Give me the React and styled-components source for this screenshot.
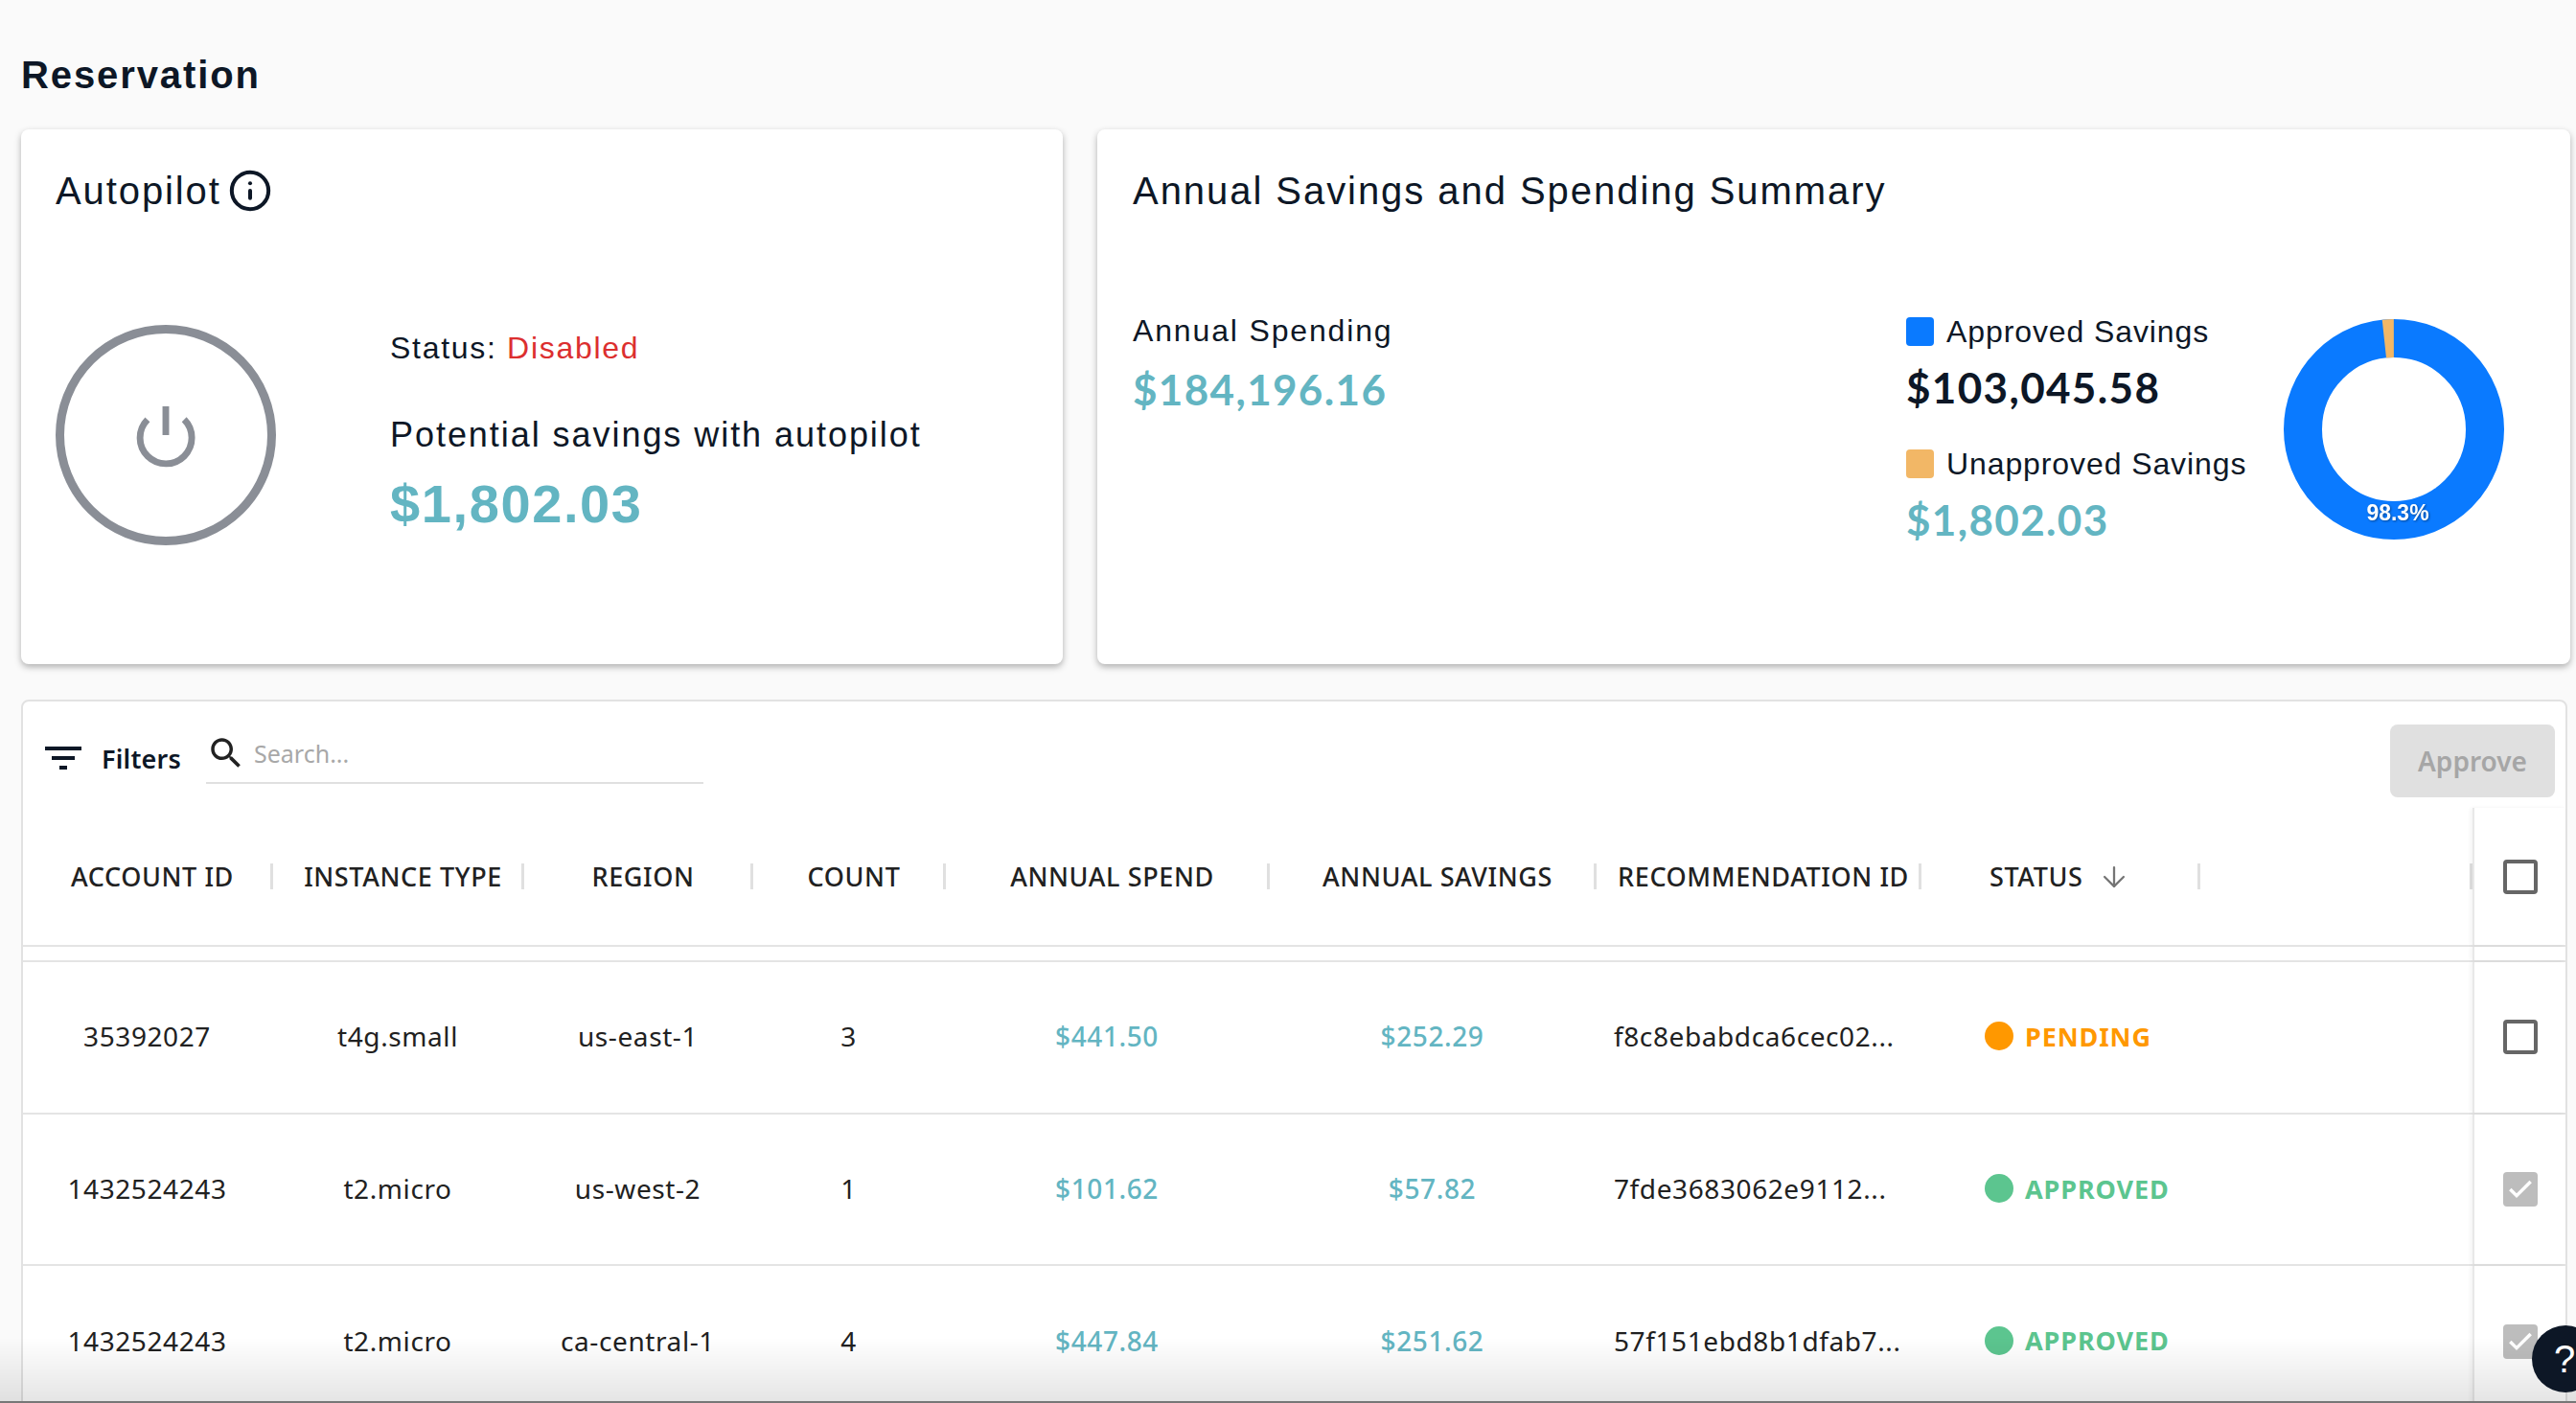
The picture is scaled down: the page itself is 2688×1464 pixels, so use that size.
import styled, { createGlobalStyle } from "styled-components";
import { ArrowDown, Check, Info, Power } from "lucide-react";

const GlobalStyle = createGlobalStyle`
  html, body {
    margin: 0;
    height: 100%;
    overflow: hidden;
    background: #fafafa;
    font-family: "Liberation Sans", Arial, sans-serif;
    color: #0d1726;
  }
`;

const GRID_COLUMNS = "261px 262px 239px 201px 338px 341px 339px 291px 284px 1fr";

const Page = styled.div`
  padding: 55px 6px 0 22px;
  height: 1464px;
  box-sizing: border-box;
  overflow: hidden;
`;

const Title = styled.h1`
  margin: 0 0 34px;
  font-size: 40px;
  line-height: 46px;
  font-weight: 700;
  letter-spacing: 1.9px;
`;

const Cards = styled.div`
  display: flex;
  gap: 36px;
`;

const Card = styled.section`
  width: ${(p) => p.$width}px;
  height: 558px;
  box-sizing: border-box;
  padding: 40px 0 0 ${(p) => p.$pad}px;
  background: #fff;
  border-radius: 8px;
  box-shadow: 0 3px 7px rgba(0, 0, 0, 0.3);
`;

const CardTitle = styled.h2`
  display: flex;
  align-items: center;
  gap: 7px;
  margin: 0;
  height: 48px;
  font-size: 40px;
  font-weight: 400;
  letter-spacing: ${(p) => p.$spacing}px;
`;

const AutopilotBody = styled.div`
  display: flex;
  margin-top: 116px;
`;

const PowerRing = styled.div`
  width: 230px;
  height: 230px;
  box-sizing: border-box;
  flex: none;
  display: flex;
  align-items: center;
  justify-content: center;
  border: 9px solid #8a8e96;
  border-radius: 50%;
  color: #8a8e96;
`;

const AutopilotText = styled.div`
  margin-left: 119px;
  padding-top: 4px;
`;

const StatusLine = styled.div`
  font-size: 32px;
  line-height: 40px;
  letter-spacing: 1.7px;
`;

const Disabled = styled.span`
  color: #dc2f2f;
`;

const PotentialLabel = styled.div`
  margin-top: 49px;
  font-size: 36px;
  line-height: 44px;
  letter-spacing: 1.95px;
`;

const BigAmount = styled.div`
  margin-top: 17px;
  font-size: 56px;
  line-height: 66px;
  font-weight: 700;
  letter-spacing: 1.6px;
  color: #63b5c2;
`;

const SummaryBody = styled.div`
  display: flex;
  margin-top: 102px;
  padding-right: 69px;
`;

const SpendColumn = styled.div`
  flex: 1;
`;

const SummaryLabel = styled.div`
  font-size: 32px;
  line-height: 40px;
  letter-spacing: ${(p) => p.$spacing}px;
`;

// Summary figures use a rounder face than the labels above them
const Amount = styled.div`
  margin-top: ${(p) => p.$top}px;
  font-family: "Lato", sans-serif;
  font-size: 44px;
  line-height: 52px;
  font-weight: 700;
  letter-spacing: 1.35px;
  color: ${(p) => (p.$dark ? "#0d1726" : "#63b5c2")};
`;

const LegendColumn = styled.div`
  width: 394px;
  flex: none;
  padding-top: 1px;
`;

const LegendRow = styled.div`
  display: flex;
  align-items: center;
  gap: 13px;
  margin-top: ${(p) => p.$top}px;
`;

const Swatch = styled.span`
  width: 29px;
  height: 30px;
  border-radius: 4px;
  background: ${(p) => p.$color};
`;

const Donut = styled.svg`
  flex: none;
  width: 230px;
  height: 230px;
  margin-top: 8px;
`;

const DonutLabel = styled.text`
  font-size: 23px;
  font-weight: 700;
  fill: #fff;
  text-anchor: middle;
  filter: drop-shadow(1px 1px 1px rgba(0, 0, 0, 0.4));
`;

const TablePanel = styled.section`
  margin-top: 37px;
  background: #fff;
  border: 2px solid #e2e2e2;
  border-radius: 8px 8px 0 0;
  width: 2657px;
  box-sizing: border-box;
  font-family: "Noto Sans", sans-serif;
`;

const Toolbar = styled.div`
  display: flex;
  height: 111px;
  padding: 24px 11px 0 23px;
  box-sizing: border-box;
`;

const FiltersButton = styled.div`
  display: flex;
  align-items: center;
  gap: 21px;
  height: 60px;
  margin-top: 5px;
  font-size: 27px;
  font-weight: 600;
  letter-spacing: 0.2px;
  color: #0d1726;
`;

const SearchBox = styled.label`
  display: flex;
  align-items: center;
  gap: 8px;
  width: 519px;
  height: 60px;
  margin: 2px 0 0 26px;
  padding: 0 0 2px 0;
  box-sizing: border-box;
  border-bottom: 2px solid #e0e0e0;
  color: #222;
`;

const SearchPlaceholder = styled.span`
  font-size: 25px;
  color: #a8a8a8;
`;

const ApproveButton = styled.button`
  margin-left: auto;
  width: 172px;
  height: 76px;
  border: 0;
  border-radius: 8px;
  background: #e0e0e0;
  color: #a6a6a6;
  font-family: inherit;
  font-size: 28px;
  font-weight: 600;
`;

const Row = styled.div`
  display: grid;
  grid-template-columns: ${GRID_COLUMNS};
  height: ${(p) => p.$height}px;
  box-sizing: border-box;
  border-bottom: 2px solid #e4e4e4;
  align-items: stretch;
`;

const HeaderCell = styled.div`
  display: flex;
  align-items: center;
  font-size: 27px;
  font-weight: 500;
  letter-spacing: 0.6px;
  color: #212121;
`;

const HeaderLabel = styled.span`
  flex: 1;
  display: flex;
  align-items: center;
  justify-content: ${(p) => (p.$left ? "flex-start" : "center")};
  gap: 16px;
  padding-left: ${(p) => p.$pad ?? 12}px;
  white-space: nowrap;
`;

const ColumnRule = styled.span`
  width: 3px;
  height: 27px;
  flex: none;
  background: #e0e0e0;
`;

const Cell = styled.div`
  display: flex;
  align-items: center;
  justify-content: ${(p) => (p.$left ? "flex-start" : "center")};
  padding: 0 ${(p) => (p.$left ? 0 : 2)}px 2px ${(p) => p.$pad ?? 0}px;
  font-size: 28px;
  letter-spacing: 0.6px;
  color: ${(p) => p.$color ?? "#212121"};
  font-weight: ${(p) => p.$weight ?? 400};
  white-space: nowrap;
`;

const PinnedCell = styled.div`
  display: flex;
  align-items: center;
  justify-content: center;
  border-left: 2px solid #e8e8e8;
  box-shadow: -2px 0 4px rgba(0, 0, 0, 0.05);
`;

const StatusDot = styled.span`
  width: 30px;
  height: 30px;
  margin-right: 12px;
  border-radius: 50%;
  background: ${(p) => p.$color};
`;

const StatusText = styled.span`
  font-size: 27px;
  font-weight: 700;
  letter-spacing: 0.9px;
  color: ${(p) => p.$color};
`;

const CheckBox = styled.span`
  width: 36px;
  height: 36px;
  box-sizing: border-box;
  display: flex;
  align-items: center;
  justify-content: center;
  border-radius: 4px;
  color: #fff;
  background: ${(p) => (p.$checked ? "#bdbdbd" : "transparent")};
  border: ${(p) => (p.$checked ? "0" : "4px solid #666")};
`;

// Window-bottom fade sits over the clipped table
const BottomFade = styled.div`
  position: fixed;
  left: 0;
  right: 0;
  bottom: 0;
  height: 68px;
  background: linear-gradient(rgba(0, 0, 0, 0), rgba(0, 0, 0, 0.1));
  border-bottom: 2px solid #777;
  box-sizing: border-box;
  pointer-events: none;
`;

const HelpButton = styled.div`
  position: fixed;
  left: 2642px;
  top: 1383px;
  width: 70px;
  height: 70px;
  border-radius: 50%;
  background: #0d1726;
  color: #fff;
  font-size: 40px;
  line-height: 70px;
  padding-left: 23px;
  box-sizing: border-box;
`;

const columns = [
  "ACCOUNT ID",
  "INSTANCE TYPE",
  "REGION",
  "COUNT",
  "ANNUAL SPEND",
  "ANNUAL SAVINGS",
  "RECOMMENDATION ID",
];

const rows = [
  { account: "35392027", type: "t4g.small", region: "us-east-1", count: 3, spend: "$441.50", savings: "$252.29", id: "f8c8ebabdca6cec02...", status: "PENDING" },
  { account: "1432524243", type: "t2.micro", region: "us-west-2", count: 1, spend: "$101.62", savings: "$57.82", id: "7fde3683062e9112...", status: "APPROVED" },
  { account: "1432524243", type: "t2.micro", region: "ca-central-1", count: 4, spend: "$447.84", savings: "$251.62", id: "57f151ebd8b1dfab7...", status: "APPROVED" },
];

const statusColors = { PENDING: "#ff9800", APPROVED: "#5cc58f" };

const FilterIcon = () => (
  <svg width="38" height="26" viewBox="0 0 38 26" fill="#0d1726">
    <rect x="0" y="1" width="38" height="4" />
    <rect x="7" y="11" width="24" height="4" />
    <rect x="15" y="21" width="8" height="4" />
  </svg>
);

const SearchIcon = () => (
  <svg width="42" height="42" viewBox="0 0 24 24" fill="currentColor">
    <path d="M15.5 14h-.79l-.28-.27C15.41 12.59 16 11.11 16 9.5 16 5.91 13.09 3 9.5 3S3 5.91 3 9.5 5.91 16 9.5 16c1.61 0 3.09-.59 4.23-1.57l.27.28v.79l5 4.99L20.49 19l-4.99-5zm-6 0C7.01 14 5 11.99 5 9.5S7.01 5 9.5 5 14 7.01 14 9.5 11.99 14 9.5 14z" />
  </svg>
);

const SavingsDonut = () => (
  <Donut viewBox="0 0 230 230">
    <circle cx="115" cy="115" r="95" fill="none" stroke="#0a7aff" strokeWidth="40" />
    <circle
      cx="115"
      cy="115"
      r="95"
      fill="none"
      stroke="#f2b766"
      strokeWidth="40"
      strokeDasharray="10.15 587"
      transform="rotate(-96.12 115 115)"
    />
    <DonutLabel x="119" y="210">98.3%</DonutLabel>
  </Donut>
);

const App = () => {
  return (
    <Page>
      <GlobalStyle />
      <Title>Reservation</Title>
      <Cards>
        <Card $width={1087} $pad={36}>
          <CardTitle $spacing={1.9}>
            Autopilot <Info size={46} strokeWidth={2.1} />
          </CardTitle>
          <AutopilotBody>
            <PowerRing>
              <Power size={72} strokeWidth={2.3} strokeLinecap="butt" />
            </PowerRing>
            <AutopilotText>
              <StatusLine>
                Status: <Disabled>Disabled</Disabled>
              </StatusLine>
              <PotentialLabel>Potential savings with autopilot</PotentialLabel>
              <BigAmount>$1,802.03</BigAmount>
            </AutopilotText>
          </AutopilotBody>
        </Card>
        <Card $width={1537} $pad={37}>
          <CardTitle $spacing={1.95}>Annual Savings and Spending Summary</CardTitle>
          <SummaryBody>
            <SpendColumn>
              <SummaryLabel $spacing={1.85}>Annual Spending</SummaryLabel>
              <Amount $top={15}>$184,196.16</Amount>
            </SpendColumn>
            <LegendColumn>
              <LegendRow $top={0}>
                <Swatch $color="#0a7aff" />
                <SummaryLabel $spacing={0.9}>Approved Savings</SummaryLabel>
              </LegendRow>
              <Amount $top={12} $dark>$103,045.58</Amount>
              <LegendRow $top={34}>
                <Swatch $color="#f2b766" />
                <SummaryLabel $spacing={0.9}>Unapproved Savings</SummaryLabel>
              </LegendRow>
              <Amount $top={12}>$1,802.03</Amount>
            </LegendColumn>
            <SavingsDonut />
          </SummaryBody>
        </Card>
      </Cards>
      <TablePanel>
        <Toolbar>
          <FiltersButton>
            <FilterIcon />
            Filters
          </FiltersButton>
          <SearchBox>
            <SearchIcon />
            <SearchPlaceholder>Search...</SearchPlaceholder>
          </SearchBox>
          <ApproveButton disabled>Approve</ApproveButton>
        </Toolbar>
        <Row $height={145}>
          {columns.map((name) => (
            <HeaderCell key={name}>
              <HeaderLabel>{name}</HeaderLabel>
              <ColumnRule />
            </HeaderCell>
          ))}
          <HeaderCell>
            <HeaderLabel $left $pad={71}>
              STATUS <ArrowDown size={34} strokeWidth={1.6} color="#757575" />
            </HeaderLabel>
            <ColumnRule />
          </HeaderCell>
          <HeaderCell>
            <HeaderLabel />
            <ColumnRule />
          </HeaderCell>
          <PinnedCell>
            <CheckBox />
          </PinnedCell>
        </Row>
        <Row $height={16}>
          <div style={{ gridColumn: "1 / 10" }} />
          <PinnedCell />
        </Row>
        {rows.map((row, i) => (
          <Row key={i} $height={158.7}>
            <Cell>{row.account}</Cell>
            <Cell>{row.type}</Cell>
            <Cell>{row.region}</Cell>
            <Cell>{row.count}</Cell>
            <Cell $color="#63b5c2" $weight={500}>{row.spend}</Cell>
            <Cell $color="#63b5c2" $weight={500}>{row.savings}</Cell>
            <Cell $left $pad={18}>{row.id}</Cell>
            <Cell $left $pad={66}>
              <StatusDot $color={statusColors[row.status]} />
              <StatusText $color={statusColors[row.status]}>{row.status}</StatusText>
            </Cell>
            <Cell />
            <PinnedCell>
              <CheckBox $checked={row.status === "APPROVED"}>
                {row.status === "APPROVED" && <Check size={32} strokeWidth={2.6} strokeLinecap="butt" strokeLinejoin="miter" />}
              </CheckBox>
            </PinnedCell>
          </Row>
        ))}
      </TablePanel>
      <BottomFade />
      <HelpButton>?</HelpButton>
    </Page>
  );
};

export default App;
